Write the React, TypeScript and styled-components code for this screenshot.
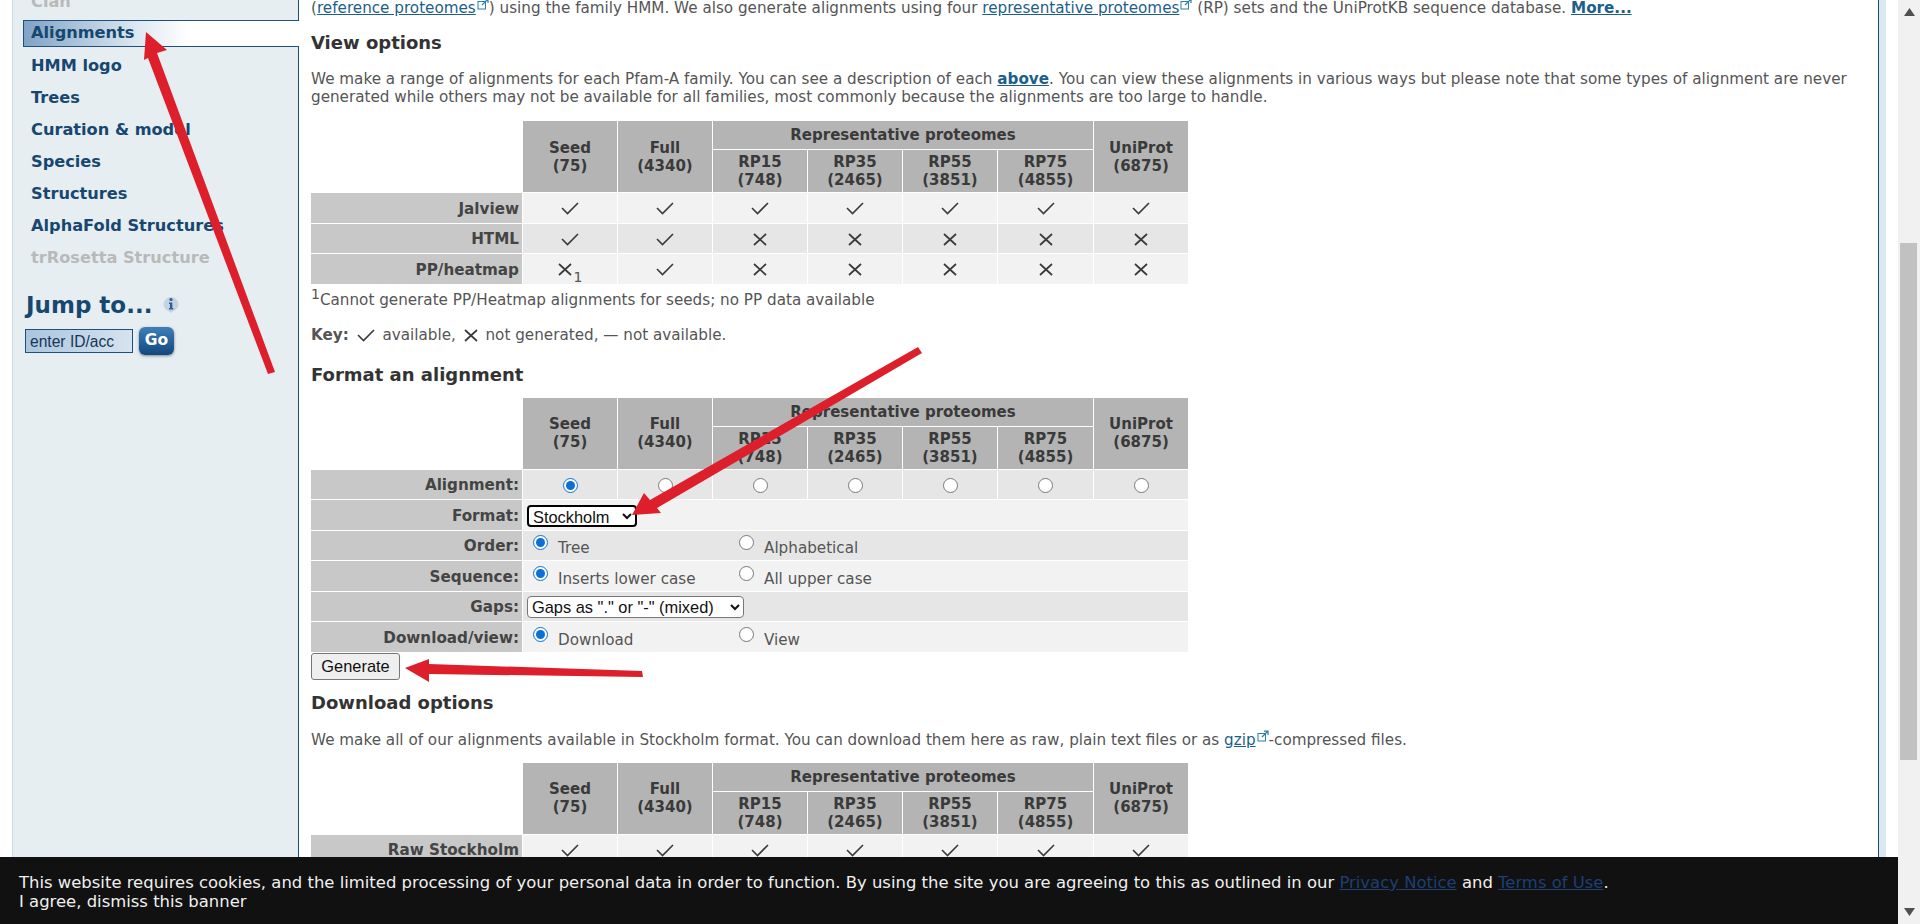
import React from "react";
import styled, { createGlobalStyle } from "styled-components";

const Global = createGlobalStyle`
  html, body { margin: 0; padding: 0; height: 100%; overflow: hidden; background: #fff; }
  body { font-family: "DejaVu Sans", Verdana, sans-serif; color: #444; }
`;

const Page = styled.div`
  position: relative;
  display: grid;
  grid-template-columns: 1fr 22px;
  height: 924px;
  overflow: hidden;
`;
const Viewport = styled.div`
  display: flex;
  height: 924px;
  overflow: hidden;
  background: #fff;
`;
const Sidebar = styled.aside`
  flex: 0 0 287px;
  margin-left: 12px;
  box-sizing: border-box;
  background: #e7eef2;
  border-left: 1px solid #cfdae3;
  border-right: 1px solid #1f4f7d;
  height: 924px;
`;
const Nav = styled.ul`
  list-style: none;
  margin: -12px 0 0 10px;
  padding: 0;
`;
const NavItem = styled.li<{ $active?: boolean; $muted?: boolean }>`
  box-sizing: border-box;
  height: 27px;
  margin-bottom: 5px;
  line-height: 27px;
  padding-left: ${(p) => (p.$active ? "7px" : "8px")};
  font-size: 16.2px;
  font-weight: bold;
  white-space: nowrap;
  color: ${(p) => (p.$muted ? "#b9b9b9" : "#17476f")};
  ${(p) =>
    p.$active
      ? `
    position: relative;
    margin-right: -1px;
    background: linear-gradient(90deg, #7fa3c6 0%, #dfe9f2 42%, #fff 60%);
    border: 1px solid #1f4f7d;
    border-right: 0;
    line-height: 23px;
  `
      : ""}
`;
const JumpTitle = styled.h3`
  margin: 18px 0 0 13px;
  display: flex;
  align-items: center;
  gap: 10px;
  height: 32px;
  font-size: 23px;
  font-weight: bold;
  color: #17476f;
`;
const JumpForm = styled.div`
  display: flex;
  align-items: flex-start;
  gap: 6px;
  margin: 6px 0 0 12px;
`;
const JumpInput = styled.div`
  box-sizing: border-box;
  width: 108px;
  height: 24px;
  margin-top: 2px;
  padding-left: 4px;
  line-height: 23px;
  font-family: "Liberation Sans", Arial, sans-serif;
  font-size: 15.6px;
  color: #17365a;
  border: 1px solid #1f4f7d;
  background: linear-gradient(100deg, #a9c5dd, #d7e4ef);
`;
const GoButton = styled.div`
  box-sizing: border-box;
  width: 35px;
  height: 28px;
  border-radius: 6px;
  background: linear-gradient(180deg, #3e7fb8, #12477f);
  box-shadow: 0 1px 3px rgba(0, 0, 0, 0.45);
  color: #fff;
  font-size: 15.5px;
  font-weight: bold;
  line-height: 27px;
  text-align: center;
`;
const Main = styled.main`
  flex: 1;
  min-width: 0;
  box-sizing: border-box;
  padding: 0 0 0 12px;
  margin-top: -2px;
`;
const RightEdge = styled.div`
  flex: 0 0 20px;
  box-sizing: border-box;
  height: 924px;
  background: linear-gradient(90deg, #dce8f0 0 7px, #fff 7px);
  border-left: 1px solid #17506a;
`;
const Para = styled.p<{ $top: number }>`
  margin: ${(p) => p.$top}px 0 0;
  font-size: 15.2px;
  line-height: 18px;
  color: #555;
  white-space: nowrap;
`;
const Heading = styled.h2<{ $top: number }>`
  margin: ${(p) => p.$top}px 0 0;
  height: 24px;
  line-height: 24px;
  font-size: 18px;
  font-weight: bold;
  color: #333;
`;
const Link = styled.a<{ $bold?: boolean }>`
  color: #1b5f8a;
  text-decoration: underline;
  font-weight: ${(p) => (p.$bold ? "bold" : "normal")};
`;
const Table = styled.table<{ $top: number }>`
  margin-top: ${(p) => p.$top}px;
  width: 878px;
  table-layout: fixed;
  border-collapse: separate;
  border-spacing: 0;
`;
const Head = styled.th<{ $h?: number }>`
  background: #b4b4b4;
  color: #3a3a3a;
  font-weight: bold;
  font-size: 15px;
  line-height: 18px;
  padding: 0;
  text-align: center;
  border-right: 1px solid #fff;
  border-bottom: 1px solid #fff;
  height: ${(p) => p.$h ?? 28}px;
`;
const Blank = styled.th`
  background: #fff;
  padding: 0;
`;
const RowHead = styled.th`
  box-sizing: border-box;
  background: #c8c8c8;
  color: #444;
  font-size: 15.2px;
  font-weight: bold;
  text-align: right;
  padding: 2px 3px 0 0;
  height: 30.5px;
  border-right: 1px solid #fff;
  border-bottom: 1px solid #fff;
  white-space: nowrap;
`;
const Cell = styled.td<{ $alt?: boolean }>`
  box-sizing: border-box;
  background: ${(p) => (p.$alt ? "#e6e6e6" : "#f2f2f2")};
  padding: 2px 0 0;
  text-align: center;
  vertical-align: middle;
  border-right: 1px solid #fff;
  border-bottom: 1px solid #fff;
  height: 30.5px;
  line-height: 0;
`;
const WideCell = styled(Cell)`
  text-align: left;
  padding-left: 4px;
  line-height: normal;
`;
const Radio = styled.input.attrs({ type: "radio" })`
  width: 15px;
  height: 15px;
  margin: 0;
  accent-color: #0a6fd6;
`;
const Choices = styled.div`
  display: grid;
  grid-template-columns: 206px 1fr;
  padding-left: 6px;
`;
const Choice = styled.label`
  display: flex;
  align-items: flex-start;
  gap: 10px;
  font-size: 15.2px;
  color: #555;
  line-height: 18px;
`;
const ChoiceText = styled.span`
  margin-top: 4px;
`;
const Select = styled.select<{ $focus?: boolean }>`
  display: block;
  box-sizing: border-box;
  height: 22px;
  padding: 0;
  font-family: "Liberation Sans", Arial, sans-serif;
  font-size: 16.4px;
  color: #111;
  background: #fff;
  border-radius: 4px;
  border: ${(p) => (p.$focus ? "2px solid #000" : "1px solid #777")};
`;
const Button = styled.button`
  display: block;
  box-sizing: border-box;
  width: 89px;
  height: 27px;
  padding: 0;
  font-family: "Liberation Sans", Arial, sans-serif;
  font-size: 16.4px;
  color: #111;
  background: #efefef;
  border: 1px solid #777;
  border-radius: 3px;
`;
const Sub = styled.sub`
  font-size: 14px;
  line-height: 0;
  vertical-align: -8px;
  margin-left: 2px;
  color: #555;
`;
const Sup = styled.sup`
  font-size: 14px;
  line-height: 0;
`;
const KeyMark = styled.span`
  margin: 0 3px;
`;
const Banner = styled.div`
  position: absolute;
  left: 0;
  bottom: 0;
  width: 1898px;
  height: 67px;
  box-sizing: border-box;
  padding: 16px 0 0 19px;
  background: #111;
  color: #f0f0f0;
  font-size: 16.45px;
  line-height: 19px;
  white-space: nowrap;
`;
const BannerLink = styled.a`
  color: #1d3f73;
  text-decoration: underline;
`;
const Scrollbar = styled.div`
  display: flex;
  flex-direction: column;
  background: #f1f1f1;
  height: 924px;
`;
const ScrollArrow = styled.div`
  height: 24px;
  display: flex;
  align-items: center;
  justify-content: center;
`;
const ScrollTrack = styled.div`
  flex: 1;
`;
const Thumb = styled.div`
  height: 517px;
  margin: 219px 3px 0 2px;
  background: #c1c1c1;
`;
const ArrowLayer = styled.svg`
  position: absolute;
  left: 0;
  top: 0;
  width: 1920px;
  height: 924px;
  pointer-events: none;
`;
const InlineIcon = styled.svg`
  vertical-align: middle;
`;
const ExternalIcon = styled(InlineIcon)`
  vertical-align: 3px;
  margin-left: 1px;
`;

const Check = () => (
  <InlineIcon width={18} height={13} viewBox="0 0 18 13" fill="none">
    <path d="M1 6 L6.5 11.5 L17 1" stroke="#3a3a3a" strokeWidth="1.6" />
  </InlineIcon>
);
const Cross = () => (
  <InlineIcon width={14} height={13} viewBox="0 0 14 13" fill="none">
    <path d="M1 1 L13 12 M13 1 L1 12" stroke="#3a3a3a" strokeWidth="1.7" />
  </InlineIcon>
);
const External = () => (
  <ExternalIcon width={12} height={12} viewBox="0 0 12 12" fill="none">
    <rect x="1" y="3.5" width="7.5" height="7.5" stroke="#2b7fa9" fill="#fff" />
    <path d="M5 7 L10.5 1.5 M7 1.2 H11 V5" stroke="#2b7fa9" strokeWidth="1.2" />
  </ExternalIcon>
);
const InfoBadge = () => (
  <svg width="18" height="18" viewBox="0 0 18 18" fill="none">
    <path d="M9 17 C7.5 15 1.5 13.5 1.5 8.5 A7.5 7.5 0 0 1 16.5 8.5 C16.5 13.5 10.5 15 9 17 Z" fill="#c3d3e2" />
    <circle cx="9" cy="3.5" r="1.6" fill="#2c5f92" />
    <path d="M7 6.5 H10.3 V12 H11.3 V13.5 H7 V12 H8 V8 H7 Z" fill="#2c5f92" />
  </svg>
);

const columnWidths = [212, 95, 95, 95, 95, 95, 96, 95];
const TableHead = () => (
  <>
    <colgroup>
      {columnWidths.map((w, i) => (
        <col key={i} style={{ width: w }} />
      ))}
    </colgroup>
    <thead>
      <tr>
        <Blank rowSpan={2} />
        <Head rowSpan={2}>Seed<br />(75)</Head>
        <Head rowSpan={2}>Full<br />(4340)</Head>
        <Head colSpan={4}>Representative proteomes</Head>
        <Head rowSpan={2}>UniProt<br />(6875)</Head>
      </tr>
      <tr>
        <Head $h={42}>RP15<br />(748)</Head>
        <Head $h={42}>RP35<br />(2465)</Head>
        <Head $h={42}>RP55<br />(3851)</Head>
        <Head $h={42}>RP75<br />(4855)</Head>
      </tr>
    </thead>
  </>
);

const Marks = ({ marks, alt, note }: { marks: string; alt?: boolean; note?: boolean }) => (
  <>
    {marks.split("").map((m, i) => (
      <Cell key={i} $alt={alt}>
        {m === "y" ? <Check /> : <Cross />}
        {note && i === 0 ? <Sub>1</Sub> : null}
      </Cell>
    ))}
  </>
);

const FormRow = ({ label, alt, children }: { label: string; alt?: boolean; children: React.ReactNode }) => (
  <tr>
    <RowHead>{label}</RowHead>
    <WideCell colSpan={7} $alt={alt}>{children}</WideCell>
  </tr>
);

const TwoChoices = ({ name, a, b }: { name: string; a: string; b: string }) => (
  <Choices>
    <Choice>
      <Radio name={name} defaultChecked />
      <ChoiceText>{a}</ChoiceText>
    </Choice>
    <Choice>
      <Radio name={name} />
      <ChoiceText>{b}</ChoiceText>
    </Choice>
  </Choices>
);

export default function App() {
  return (
    <Page>
      <Global />
      <Viewport>
        <Sidebar>
          <Nav>
            <NavItem $muted>Clan</NavItem>
            <NavItem $active>Alignments</NavItem>
            <NavItem>HMM logo</NavItem>
            <NavItem>Trees</NavItem>
            <NavItem>Curation &amp; model</NavItem>
            <NavItem>Species</NavItem>
            <NavItem>Structures</NavItem>
            <NavItem>AlphaFold Structures</NavItem>
            <NavItem $muted>trRosetta Structure</NavItem>
          </Nav>
          <JumpTitle>
            Jump to...
            <InfoBadge />
          </JumpTitle>
          <JumpForm>
            <JumpInput>enter ID/acc</JumpInput>
            <GoButton>Go</GoButton>
          </JumpForm>
        </Sidebar>
        <Main>
          <Para $top={0}>
            (<Link>reference proteomes</Link><External />) using the family HMM. We also generate alignments using four{" "}
            <Link>representative proteomes</Link><External /> (RP) sets and the UniProtKB sequence database.{" "}
            <Link $bold>More...</Link>
          </Para>
          <Heading $top={14}>View options</Heading>
          <Para $top={15}>
            We make a range of alignments for each Pfam-A family. You can see a description of each{" "}
            <Link $bold>above</Link>. You can view these alignments in various ways but please note that some types of alignment are never
            <br />
            generated while others may not be available for all families, most commonly because the alignments are too large to handle.
          </Para>
          <Table $top={15}>
            <TableHead />
            <tbody>
              <tr><RowHead>Jalview</RowHead><Marks marks="yyyyyyy" /></tr>
              <tr><RowHead>HTML</RowHead><Marks marks="yynnnnn" alt /></tr>
              <tr><RowHead>PP/heatmap</RowHead><Marks marks="nynnnnn" note /></tr>
            </tbody>
          </Table>
          <Para $top={6}>
            <Sup>1</Sup>Cannot generate PP/Heatmap alignments for seeds; no PP data available
          </Para>
          <Para $top={17}>
            <b>Key:</b> <KeyMark><Check /></KeyMark> available, <KeyMark><Cross /></KeyMark> not generated, — not available.
          </Para>
          <Heading $top={19}>Format an alignment</Heading>
          <Table $top={11}>
            <TableHead />
            <tbody>
              <tr>
                <RowHead>Alignment:</RowHead>
                {[0, 1, 2, 3, 4, 5, 6].map((i) => (
                  <Cell key={i} $alt>
                    <Radio name="alignment" defaultChecked={i === 0} />
                  </Cell>
                ))}
              </tr>
              <FormRow label="Format:">
                <Select $focus style={{ width: 110 }}>
                  <option>Stockholm</option>
                </Select>
              </FormRow>
              <FormRow label="Order:" alt>
                <TwoChoices name="order" a="Tree" b="Alphabetical" />
              </FormRow>
              <FormRow label="Sequence:">
                <TwoChoices name="sequence" a="Inserts lower case" b="All upper case" />
              </FormRow>
              <FormRow label="Gaps:" alt>
                <Select style={{ width: 217 }}>
                  <option>Gaps as "." or "-" (mixed)</option>
                </Select>
              </FormRow>
              <FormRow label="Download/view:">
                <TwoChoices name="download" a="Download" b="View" />
              </FormRow>
            </tbody>
          </Table>
          <Button>Generate</Button>
          <Heading $top={11}>Download options</Heading>
          <Para $top={15}>
            We make all of our alignments available in Stockholm format. You can download them here as raw, plain text files or as{" "}
            <Link>gzip</Link><External />-compressed files.
          </Para>
          <Table $top={14}>
            <TableHead />
            <tbody>
              <tr><RowHead>Raw Stockholm</RowHead><Marks marks="yyyyyyy" /></tr>
            </tbody>
          </Table>
        </Main>
        <RightEdge />
      </Viewport>
      <Scrollbar>
        <ScrollArrow>
          <svg width="11" height="8" viewBox="0 0 11 8"><path d="M5.5 0 L11 8 H0 Z" fill="#505050" /></svg>
        </ScrollArrow>
        <ScrollTrack>
          <Thumb />
        </ScrollTrack>
        <ScrollArrow>
          <svg width="11" height="8" viewBox="0 0 11 8"><path d="M0 0 H11 L5.5 8 Z" fill="#505050" /></svg>
        </ScrollArrow>
      </Scrollbar>
      <ArrowLayer viewBox="0 0 1920 924">
        <path d="M146 32 L167 50 L157 53 L275 372 L268 374 L148 58 L144 60 Z" fill="#dc1f2a" />
        <path d="M632 515 L644 493 L650 500 L918 347 L922 353 L657 508 L661 513 Z" fill="#dc1f2a" />
        <path d="M405 668 L429 659 L429 664 L642 671 L643 677 L429 674 L429 682 Z" fill="#dc1f2a" />
      </ArrowLayer>
      <Banner>
        This website requires cookies, and the limited processing of your personal data in order to function. By using the site you are agreeing to this as outlined in our{" "}
        <BannerLink>Privacy Notice</BannerLink> and <BannerLink>Terms of Use</BannerLink>.
        <br />
        I agree, dismiss this banner
      </Banner>
    </Page>
  );
}
